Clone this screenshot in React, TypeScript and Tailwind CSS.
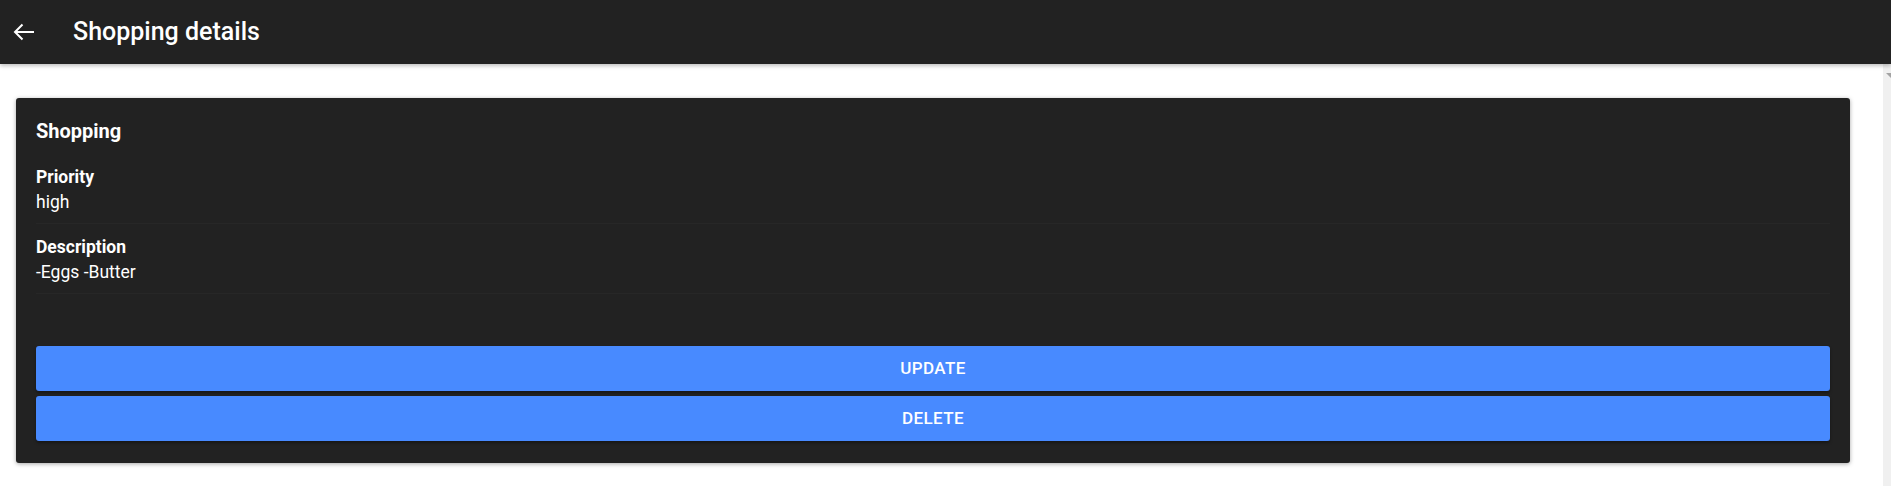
import type { ReactNode } from 'react'

const FIELDS = [
  { label: 'Priority', value: 'high' },
  { label: 'Description', value: '-Eggs -Butter' },
]

function BackArrow() {
  return (
    <svg width="22" height="18" viewBox="0 0 22 18" fill="none" stroke="white" strokeWidth="2">
      <path d="M21 9H2" />
      <path d="M9.5 1.5L2 9l7.5 7.5" />
    </svg>
  )
}

function BlockButton({ children }: { children: ReactNode }) {
  return (
    <button className="h-[45px] w-full rounded-[3px] bg-[#488aff] text-[17px] font-medium uppercase tracking-[0.4px] text-white shadow-[0_2px_3px_rgba(0,0,0,0.35)]">
      {children}
    </button>
  )
}

export default function App() {
  return (
    <div className="flex h-[486px] flex-col overflow-hidden bg-white font-['Roboto',_'Noto_Sans',_sans-serif]">
      {/* Toolbar */}
      <header className="relative z-10 flex h-16 shrink-0 items-center bg-[#222222] shadow-[0_2px_4px_rgba(0,0,0,0.25)]">
        <div className="flex w-[73px] items-center pl-[13px]">
          <BackArrow />
        </div>
        <h1 className="text-[25px] font-medium text-white">Shopping details</h1>
      </header>

      <div className="flex flex-1">
        {/* Content */}
        <main className="flex-1 pl-4 pr-[33px] pt-[34px]">
          <section className="rounded-[3px] bg-[#222222] px-5 pb-[22px] pt-[21px] text-white shadow-[0_1px_4px_rgba(0,0,0,0.35)]">
            <h2 className="text-[20px] font-bold leading-6">Shopping</h2>

            <div className="mt-[22px] flex flex-col">
              {FIELDS.map((f, i) => (
                <div
                  key={f.label}
                  className={`border-b border-[#272727] pb-2 text-[17.5px] leading-[25px] ${i > 0 ? 'pt-[11px]' : ''}`}
                >
                  <div className="font-bold">{f.label}</div>
                  <div>{f.value}</div>
                </div>
              ))}
            </div>

            <div className="mt-[52px] flex flex-col gap-[5px]">
              <BlockButton>Update</BlockButton>
              <BlockButton>Delete</BlockButton>
            </div>
          </section>
        </main>

        {/* Scrollbar */}
        <div className="flex w-[8px] flex-col items-end bg-[#f0f0f0] pt-[9px]">
          <div className="h-0 w-0 border-b-[5px] border-l-[5px] border-b-transparent border-l-transparent border-t-0 border-r-[5px] border-r-[#a3a3a3]" />
        </div>
      </div>
    </div>
  )
}
